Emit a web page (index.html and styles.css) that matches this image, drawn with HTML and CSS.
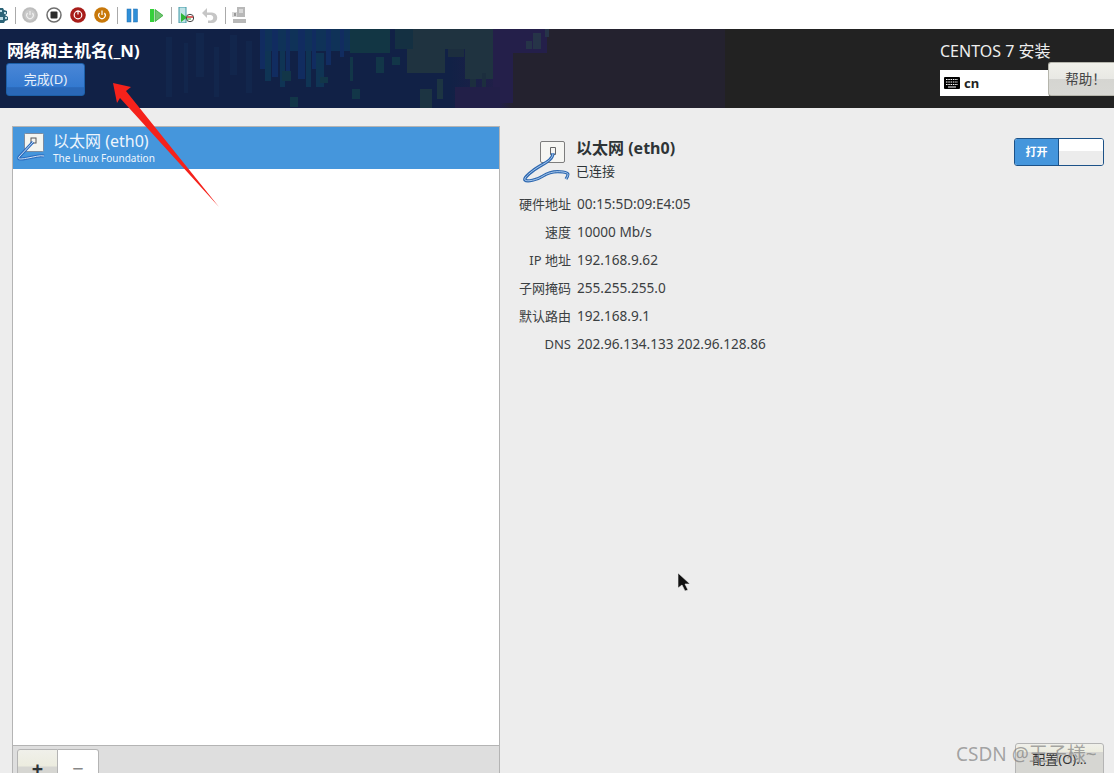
FILE: index.html
```html
<!DOCTYPE html>
<html lang="zh-CN">
<head>
  <meta charset="UTF-8">
  <meta name="viewport" content="width=device-width, initial-scale=1.0">
  <title>网络和主机名</title>
  <link rel="stylesheet" href="styles.css">
</head>
<body>
  <!-- VM toolbar -->
  <div class="toolbar">
    <svg class="tool tool-gear" viewBox="0 0 8 16"><path d="M0 1h3l1 2 3 1v3L5 8l3 2v3l-3 1-1 2H0z" fill="#2c6478"/><path d="M0 3h2v2H0zM4 5h2v2H4zM0 10h3v3H0zM5 10h2v2H5z" fill="#bcdbe4"/></svg>
    <span class="tool-sep"></span>
    <svg class="tool" viewBox="0 0 16 16"><circle cx="8" cy="8" r="7.8" fill="#bcbcbc"/><circle cx="8" cy="8" r="5.800" fill="#c9c9c9"/><path d="M5.600 6a3.300 3.300 0 1 0 4.800 0M8 4v4" fill="none" stroke="#efefef" stroke-width="1.200"/></svg>
    <svg class="tool" viewBox="0 0 16 16"><circle cx="8" cy="8" r="7" fill="#fff" stroke="#6f6f6f" stroke-width="1.500"/><rect x="4.500" y="4.500" width="7" height="7" rx="1" fill="#2b2b2b"/></svg>
    <svg class="tool" viewBox="0 0 16 16"><circle cx="8" cy="8" r="7.800" fill="#a81d1a"/><circle cx="8" cy="8" r="3.800" fill="none" stroke="#fff" stroke-width="1.200"/><path d="M8 3.500v4" stroke="#fff" stroke-width="1.200"/></svg>
    <svg class="tool" viewBox="0 0 16 16"><circle cx="8" cy="8" r="7.800" fill="#c8780a"/><path d="M5.600 6a3.300 3.300 0 1 0 4.800 0M8 3.500V8" fill="none" stroke="#fff" stroke-width="1.200"/></svg>
    <span class="tool-sep"></span>
    <svg class="tool" viewBox="0 0 16 16"><rect x="3" y="2" width="4" height="13" fill="#2f8fd8" stroke="#1c6cb0" stroke-width=".5"/><rect x="9.500" y="2" width="4" height="13" fill="#2f8fd8" stroke="#1c6cb0" stroke-width=".5"/></svg>
    <svg class="tool" viewBox="0 0 16 16"><rect x="2" y="2" width="4" height="13" fill="#35d03a"/><path d="M7 2.500 15 8.500l-8 6z" fill="#6fc36f" stroke="#2fa835" stroke-width=".8"/></svg>
    <span class="tool-sep"></span>
    <svg class="tool" viewBox="0 0 16 16"><path d="M1 0h7v16H1z" fill="#bfe3e6" stroke="#3f97a5"/><path d="M3 6l6 4.500L3 15z" fill="#2fb638"/><circle cx="12" cy="11" r="3.700" fill="#fff" stroke="#444"/><path d="M9 10h6" stroke="#c33" stroke-width="1.500"/><path d="M9 12h4" stroke="#2fa835"/></svg>
    <svg class="tool" viewBox="0 0 16 16"><path d="M5 1 0 6l5 5V8h4a2.800 2.800 0 0 1 0 5.500H6V16h4a5.200 5.200 0 0 0 0-10.500H5z" fill="#c6c6c6"/></svg>
    <span class="tool-sep"></span>
    <svg class="tool" viewBox="0 0 16 16"><path d="M5 0h8v10H5zM1 12h13v4H1z" fill="#b8b8b8"/><path d="M7 2h4v4H7zM0 5h5v5H0z" fill="#d8d8d8"/><path d="M2 6h2v3H2z" fill="#999"/></svg>
  </div>

  <header class="topbar">
    <svg class="topbar-art" viewBox="0 0 1114 79" preserveAspectRatio="none" shape-rendering="crispEdges">
      <!-- faint streaks, left -->
      <path d="M166 8h6v60h-6zM184 14h4v50h-4zM196 4h8v44h-8zM214 18h5v50h-5zM230 6h7v40h-7zM246 12h6v52h-6z" fill="#12264c"/>
      <!-- blue band -->
      <rect x="260" y="0" width="110" height="22" fill="#0f3258"/>
      <rect x="350" y="0" width="40" height="24" fill="#123644"/>
      <path d="M260 0h5v40h-5zM272 0h6v48h-6zM286 0h4v44h-4zM298 0h7v50h-7zM312 0h4v40h-4zM326 0h5v36h-5zM340 0h4v28h-4z" fill="#112c60"/>
      <path d="M265 22h6v30h-6zM280 22h5v36h-5zM306 22h5v36h-5zM316 24h8v34h-8z" fill="#0f3454"/>
      <path d="M282 42h9v10h-9zM320 48h8v6h-8zM350 28h3v24h-3zM376 28h8v16h-8zM392 28h8v8h-8zM352 60h8v10h-8zM290 68h8v10h-8z" fill="#123648"/>
      <path d="M420 60h12v24h-12zM437 50h6v20h-6z" fill="#1c3442"/>
      <!-- grey teal patch -->
      <rect x="395" y="0" width="18" height="20" fill="#143042"/>
      <rect x="413" y="0" width="80" height="20" fill="#1f3340"/>
      <rect x="407" y="20" width="38" height="24" fill="#1f3340"/>
      <rect x="465" y="20" width="28" height="30" fill="#1f3340"/>
      <path d="M470 50h6v14h-6zM482 44h4v16h-4zM448 20h16v8h-16z" fill="#1c2e3e"/>
      <!-- purple then dark -->
      <rect x="493" y="0" width="54" height="24" fill="#241f4a"/>
      <rect x="493" y="24" width="20" height="50" fill="#241f4a"/>
      <rect x="455" y="58" width="45" height="21" fill="#221f48"/>
      <path d="M533 4h8v16h-8zM526 12h6v8h-6zM545 0h4v8h-4z" fill="#263448"/>
    </svg>
    <div class="topbar-left">
      <h1 class="page-title">网络和主机名(_N)</h1>
      <button class="done-btn">完成(D)</button>
    </div>
    <div class="topbar-right">
      <div class="product">CENTOS 7 安装</div>
      <div class="kb-row">
        <div class="kb">
          <svg class="kb-icon" viewBox="0 0 16 12"><rect width="16" height="12" rx="1" fill="#000"/><path d="M2 2.500h12M2 5h12M2 7.500h12" stroke="#fff" stroke-dasharray="1.500 .8"/><path d="M4 10h8" stroke="#fff"/></svg>
          <span>cn</span>
        </div>
        <button class="help-btn">帮助！</button>
      </div>
    </div>
  </header>

  <main class="content">
    <section class="device-panel">
      <div class="device-row">
        <svg class="row-icon" viewBox="0 0 32 32">
          <rect x="8.500" y="1.500" width="19" height="18" rx="1" fill="#f3f5f0" stroke="#7c8ca0"/>
          <rect x="15" y="6" width="5" height="5" fill="none" stroke="#555"/>
          <path d="M17 10 3 25c-2 3 3 2 9 1s12-3 16-2" fill="none" stroke="#2a6cc0" stroke-width="3"/>
          <path d="M17 10 3 25c-2 3 3 2 9 1s12-3 16-2" fill="none" stroke="#cfe0f2" stroke-width="1"/>
        </svg>
        <div class="row-text">
          <div class="row-name">以太网 (eth0)</div>
          <div class="row-vendor">The Linux Foundation</div>
        </div>
      </div>
      <div class="device-space"></div>
      <div class="device-foot">
        <button class="foot-btn foot-add">+</button><button class="foot-btn foot-del">−</button>
      </div>
    </section>

    <section class="detail">
      <div class="detail-top">
        <div class="detail-head">
          <svg class="detail-icon" viewBox="0 0 48 48">
            <rect x="17.500" y="1.500" width="24" height="21" rx="1.500" fill="#f6f6f3" stroke="#7d7d7d"/>
            <path d="M27.500 7.500h5v7h-5z" fill="none" stroke="#666"/>
            <path d="M30 13c0 6-6 9-13 13S0 38 2 40s12 0 18-4 14-5 20-4 6 2 3 7" fill="none" stroke="#2e68b0" stroke-width="3.200"/>
            <path d="M30 13c0 6-6 9-13 13S0 38 2 40s12 0 18-4 14-5 20-4 6 2 3 7" fill="none" stroke="#a9c9ec" stroke-width="1"/>
          </svg>
          <div>
            <div class="detail-name">以太网 (eth0)</div>
            <div class="detail-state">已连接</div>
          </div>
        </div>
        <div class="switch">
          <span class="switch-on">打开</span>
          <span class="switch-off"></span>
        </div>
      </div>
      <dl class="props">
        <dt>硬件地址</dt><dd>00:15:5D:09:E4:05</dd>
        <dt>速度</dt><dd>10000 Mb/s</dd>
        <dt>IP 地址</dt><dd>192.168.9.62</dd>
        <dt>子网掩码</dt><dd>255.255.255.0</dd>
        <dt>默认路由</dt><dd>192.168.9.1</dd>
        <dt>DNS</dt><dd>202.96.134.133 202.96.128.86</dd>
      </dl>
      <div class="detail-foot">
        <button class="config-btn">配置(O)...</button>
      </div>
    </section>
  </main>

  <!-- stuff drawn over the screenshot -->
  <svg class="arrow" viewBox="0 0 108 126"><path d="M1 1 19 5 14 9 107 125 8 16 5 21z" fill="#f5221b"/></svg>
  <svg class="cursor" viewBox="0 0 14 20"><path d="M1 1v15l4-3 3 6 3-1-3-6h5z" fill="#111" stroke="#eee" stroke-width=".6"/></svg>
  <div class="watermark">CSDN @王子様~</div>
</body>
</html>
```

FILE: styles.css
```css
* {
  box-sizing: border-box;
}

html, body {
  height: 100%;
}

body {
  margin: 0;
  height: 773px;
  overflow: hidden;
  display: flex;
  flex-direction: column;
  position: relative;
  background-color: #ededed;
  color: #2e3436;
  font-family: "Noto Sans", "Noto Sans CJK SC", sans-serif;
  font-size: 13px;
}

button {
  font-family: inherit;
  padding: 0;
}

.toolbar {
  height: 29px;
  flex: none;
  display: flex;
  align-items: center;
  padding-top: 1px;
  background-color: #fff;
}

.tool {
  width: 16px;
  height: 16px;
  margin-left: 8px;
  flex: none;
}

.tool-gear {
  width: 8px;
  margin-left: 0;
}

.tool-sep {
  width: 1px;
  height: 17px;
  margin-left: 7px;
  background-color: #aaa;
}

.tool-sep + .tool {
  margin-left: 6px;
}

.topbar {
  height: 79px;
  flex: none;
  display: flex;
  justify-content: space-between;
  position: relative;
  background: linear-gradient(90deg, #112146 0, #112146 450px, #221f48 500px, #24222f 513px, #24222f 725px, #222 725px);
  color: #fff;
}

.topbar-art {
  position: absolute;
  left: 0;
  top: 0;
  width: 100%;
  height: 100%;
}

.topbar-left, .topbar-right {
  position: relative;
}

.topbar-left {
  padding: 12px 0 0 6px;
}

.page-title {
  margin: 0 0 0 1px;
  font-size: 16.8px;
  line-height: 20px;
  font-weight: 700;
}

.done-btn {
  display: block;
  width: 79px;
  height: 33px;
  margin-top: 2px;
  padding-bottom: 2px;
  border: 1px solid #1c5fa8;
  border-radius: 3px;
  background: linear-gradient(#4a86d6, #3379cf 75%, #2a68b8 76%);
  color: #e8f0fa;
  font-size: 13px;
}

.topbar-right {
  width: 174px;
  padding-top: 12px;
}

.product {
  font-size: 16px;
  line-height: 20px;
  color: #eee;
}

.kb-row {
  display: flex;
  margin-top: 9px;
  align-items: flex-start;
}

.kb {
  width: 109px;
  height: 26px;
  display: flex;
  align-items: center;
  gap: 4px;
  padding-left: 4px;
  background-color: #fff;
  color: #222;
  font-size: 13px;
  font-weight: 700;
}

.kb-icon {
  width: 16px;
  height: 12px;
}

.help-btn {
  width: 66px;
  height: 34px;
  margin-top: -8px;
  margin-left: -1px;
  padding: 0 0 3px 8px;
  flex: none;
  border: 1px solid #b5b5ac;
  border-right: 0;
  border-radius: 3px 0 0 3px;
  background: linear-gradient(#f0f0ea, #e8e8e4 50%, #d5d5d1 51%, #d8d8d4);
  color: #444;
  font-family: "Noto Sans CJK JP", sans-serif;
  font-size: 13.5px;
}

.content {
  flex: 1;
  min-height: 0;
  display: flex;
  padding: 18px 10px 0 12px;
}

.device-panel {
  width: 488px;
  flex: none;
  display: flex;
  flex-direction: column;
  border: 1px solid #b4b4b4;
  border-bottom: 0;
  background-color: #fff;
}

.device-row {
  height: 42px;
  display: flex;
  align-items: center;
  gap: 5px;
  padding-left: 3px;
  background-color: #4596dc;
  color: #fff;
}

.row-icon {
  width: 32px;
  height: 32px;
}

.row-name {
  font-size: 16px;
  line-height: 20px;
  color: #eef5fc;
}

.row-vendor {
  font-size: 10px;
  line-height: 15px;
  color: #eef5fc;
}

.device-space {
  flex: 1;
}

.device-foot {
  height: 28px;
  display: flex;
  align-items: flex-start;
  padding: 3px 0 0 4px;
  background-color: #dedede;
  border-top: 1px solid #b4b4b4;
}

.foot-btn {
  width: 41px;
  height: 40px;
  border: 1px solid #b4b4b4;
  border-radius: 3px 0 0 0;
  background-color: #fff;
  font-size: 20px;
  line-height: 34px;
  color: #2e3436;
}

.foot-add {
  background: linear-gradient(#f0f0ea, #ececdf 16px, #d6d6d2 17px);
  font-weight: 700;
}

.foot-del {
  border-left: 0;
  border-radius: 0 3px 0 0;
  color: #888;
}

.detail {
  flex: 1;
  display: flex;
  flex-direction: column;
  padding: 12px 0 0 19px;
}

.detail-top {
  display: flex;
  justify-content: space-between;
  align-items: flex-start;
}

.detail-head {
  display: flex;
  gap: 5px;
  margin-left: 4px;
}

.detail-icon {
  width: 48px;
  height: 48px;
  margin-top: 2px;
}

.detail-name {
  font-size: 16px;
  line-height: 20px;
  font-weight: 700;
}

.detail-state {
  font-size: 13px;
  line-height: 26px;
}

.switch {
  width: 90px;
  height: 28px;
  display: flex;
  border: 1px solid #1c5288;
  border-radius: 3px;
  overflow: hidden;
}

.switch-on {
  width: 44px;
  border-right: 1px solid #1c5288;
  background-color: #4596dc;
  color: #fff;
  font-size: 11px;
  font-weight: 700;
  line-height: 26px;
  text-align: center;
}

.switch-off {
  flex: 1;
  background: linear-gradient(#fff 45%, #ececec 46%);
}

.props {
  display: grid;
  grid-template-columns: 52px auto;
  justify-content: start;
  column-gap: 6px;
  grid-auto-rows: 28px;
  margin: 2px 0 0;
  line-height: 28px;
  white-space: nowrap;
}

.props dt {
  text-align: right;
  color: #3b4042;
}

.props dd {
  margin: 0;
  font-size: 13.6px;
  color: #3b4042;
}

.detail-foot {
  margin-top: auto;
  display: flex;
  justify-content: flex-end;
}

.config-btn {
  width: 89px;
  height: 40px;
  margin-bottom: -10px;
  padding-bottom: 10px;
  border: 1px solid #b4b4b4;
  border-radius: 3px;
  background: linear-gradient(#f0f0ea, #ececdf 20%, #d6d6d2 22%);
  color: #333;
  font-size: 13px;
  text-align: center;
}

.arrow {
  position: absolute;
  left: 112px;
  top: 82px;
  width: 108px;
  height: 126px;
}

.cursor {
  position: absolute;
  left: 677px;
  top: 572px;
  width: 14px;
  height: 20px;
}

.watermark {
  position: absolute;
  left: 956px;
  top: 742px;
  font-size: 19px;
  line-height: 24px;
  color: rgba(120, 120, 120, .65);
  white-space: nowrap;
}
```
